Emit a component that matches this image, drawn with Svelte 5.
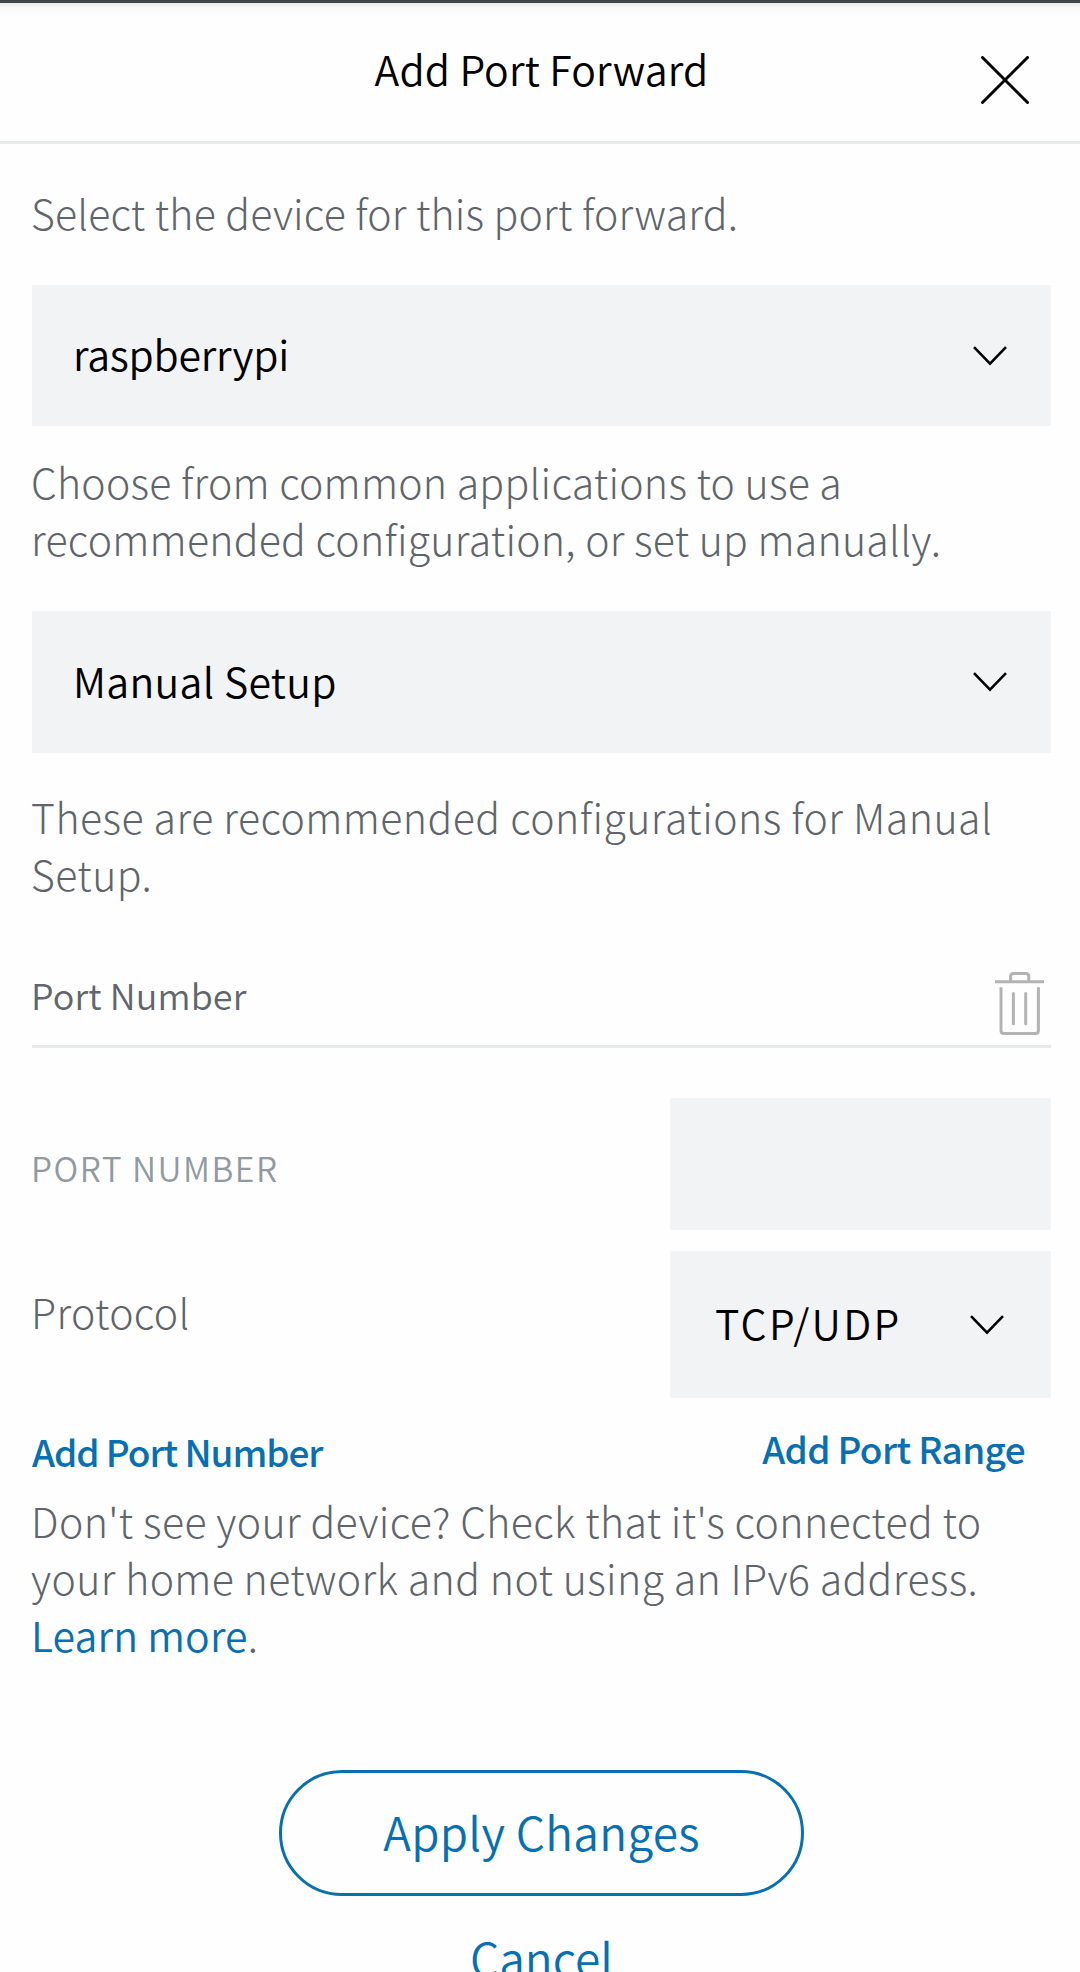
<script>
  let portNumber = $state('');
</script>

{#snippet chevron()}
  <svg class="chevron" viewBox="0 0 36 20" aria-hidden="true">
    <polyline points="2,1.2 18,17.6 34,1.2" />
  </svg>
{/snippet}

<main class="sheet">
  <header class="header">
    <h1>Add Port Forward</h1>
    <button class="close" aria-label="Close">
      <svg viewBox="0 0 48 48"><path d="M1.5 1.5 46.5 46.5M46.5 1.5 1.5 46.5" /></svg>
    </button>
  </header>

  <section class="body">
    <p class="copy intro">Select the device for this port forward.</p>
    <button class="select device"><span>raspberrypi</span>{@render chevron()}</button>

    <p class="copy choose">
      Choose from common applications to use a<br />recommended configuration, or set up manually.
    </p>
    <button class="select setup"><span>Manual Setup</span>{@render chevron()}</button>

    <p class="copy these">
      These are recommended configurations for Manual<br />Setup.
    </p>

    <div class="group-head">
      <h2>Port Number</h2>
      <button class="trash" aria-label="Delete">
        <svg viewBox="0 0 49 64">
          <path d="M0 9.8H49M15.6 9.8V4.6Q15.6 1.6 18.6 1.6H30.8Q33.8 1.6 33.8 4.6V9.8" />
          <path d="M6 15.3V58.5Q6 61.5 9 61.5H40.4Q43.4 61.5 43.4 58.5V15.3" />
          <path class="rib" d="M18.4 21.5V51.8M30.7 21.5V51.8" />
        </svg>
      </button>
    </div>

    <div class="field port">
      <label for="port">PORT NUMBER</label>
      <input id="port" bind:value={portNumber} />
    </div>
    <div class="field protocol">
      <span class="copy">Protocol</span>
      <button class="select small"><span>TCP/UDP</span>{@render chevron()}</button>
    </div>

    <div class="links">
      <button class="add-number">Add Port Number</button>
      <button class="add-range">Add Port Range</button>
    </div>

    <p class="copy help">
      Don't see your device? Check that it's connected to<br />your home network and not using an IPv6 address.<br /><span class="more">Learn more</span>.
    </p>

    <div class="actions">
      <button class="apply">Apply Changes</button>
      <button class="cancel">Cancel</button>
    </div>
  </section>
</main>

<style>
  :global(body) {
    margin: 0;
    background: #fff;
  }
  .sheet {
    box-sizing: border-box;
    width: 1080px;
    height: 1972px;
    overflow: hidden;
    background: #fefefe;
    color: #000;
    font-family: 'Noto Sans CJK SC', 'Noto Sans', sans-serif;
    font-size: 41px;
    font-weight: 350;
    line-height: 57px;
  }
  button {
    appearance: none;
    margin: 0;
    padding: 0;
    border: 0;
    background: none;
    color: inherit;
    font: inherit;
    text-align: left;
  }
  h1,
  h2,
  p {
    margin: 0;
    font-size: inherit;
    font-weight: inherit;
  }
  svg {
    display: block;
    fill: none;
  }

  .header {
    box-sizing: border-box;
    display: grid;
    grid-template-columns: 1fr auto 1fr;
    align-items: start;
    height: 144px;
    border-top: 3px solid #3f474d;
    border-bottom: 3px solid #e7eaea;
    padding: 37px 0 0 3px;
    background: linear-gradient(#e9eaeb, #f8f8f8 5px, #fefefe 14px);
  }
  h1 {
    grid-column: 2;
    letter-spacing: 0.15px;
  }
  .close {
    justify-self: end;
    margin: 16px 51px 0 0;
  }
  .close svg {
    width: 48px;
    height: 48px;
    stroke: #000;
    stroke-width: 3;
    stroke-linecap: round;
  }

  .body {
    padding: 40px 29px 0 32px;
  }
  .copy {
    margin-left: -1px;
    color: #5f656b;
    font-weight: 300;
    white-space: nowrap;
  }
  .intro {
    letter-spacing: 0.2px;
  }
  .choose {
    margin-top: 27px;
    letter-spacing: 0.25px;
  }
  .these {
    margin-top: 35px;
    letter-spacing: 0.46px;
  }
  .help {
    letter-spacing: 0.36px;
  }

  .select {
    box-sizing: border-box;
    display: flex;
    align-items: center;
    justify-content: space-between;
    width: 100%;
    height: 141px;
    padding: 0 44px 0 41px;
    border-radius: 2px;
    background: #f2f3f5;
  }
  .select span {
    padding-bottom: 4px;
  }
  .device {
    margin-top: 44px;
    letter-spacing: -0.25px;
  }
  .setup {
    height: 142px;
    margin-top: 44px;
    letter-spacing: 0.3px;
  }
  .chevron {
    width: 36px;
    height: 20px;
    margin-right: -1px;
    stroke: #000;
    stroke-width: 2.6;
  }

  .group-head {
    box-sizing: border-box;
    display: flex;
    align-items: flex-start;
    justify-content: space-between;
    height: 146px;
    border-bottom: 3px solid #e7e9ea;
  }
  h2 {
    margin: 67px 0 0 -1px;
    color: #60666c;
    font-size: 36px;
    line-height: 50px;
    letter-spacing: 0.1px;
  }
  .trash {
    margin: 70px 7px 0 0;
  }
  .trash svg {
    width: 49px;
    height: 64px;
    stroke: #b3b3b3;
    stroke-width: 3;
  }
  .rib {
    stroke-linecap: round;
  }

  .field {
    display: flex;
    align-items: flex-start;
    justify-content: space-between;
  }
  .port {
    margin-top: 50px;
  }
  label {
    margin: 45px 0 0 -1px;
    color: #919aa1;
    font-size: 33.5px;
    line-height: 50px;
    letter-spacing: 1.5px;
  }
  input {
    box-sizing: border-box;
    width: 381px;
    height: 132px;
    border: 0;
    border-radius: 2px;
    padding: 0 45px;
    background: #f2f3f5;
    font: inherit;
    outline: none;
  }
  .protocol {
    margin-top: 21px;
  }
  .protocol .copy {
    padding-top: 32px;
    letter-spacing: 0.3px;
  }
  .small {
    width: 381px;
    height: 147px;
    padding: 0 47px 0 45px;
    letter-spacing: 2.3px;
  }

  .links {
    display: flex;
    align-items: flex-start;
    justify-content: space-between;
    height: 94px;
    color: #0870b0;
    font-size: 37px;
    font-weight: 500;
    line-height: 50px;
  }
  .add-number {
    margin: 28px 0 0;
    letter-spacing: -1.05px;
  }
  .add-range {
    margin: 25px 26px 0 0;
    letter-spacing: -0.65px;
  }

  .more {
    color: #0870b0;
    font-weight: 350;
    letter-spacing: 0.1px;
  }

  .actions {
    display: flex;
    flex-direction: column;
    align-items: center;
    margin-top: 107px;
    color: #0870b0;
    font-size: 46px;
    line-height: 60px;
  }
  .apply {
    box-sizing: border-box;
    width: 525px;
    height: 126px;
    border: 3px solid #0870b0;
    border-radius: 63px;
    padding-bottom: 4px;
    text-align: center;
    letter-spacing: 0.3px;
  }
  .cancel {
    margin-top: 31px;
  }
</style>
